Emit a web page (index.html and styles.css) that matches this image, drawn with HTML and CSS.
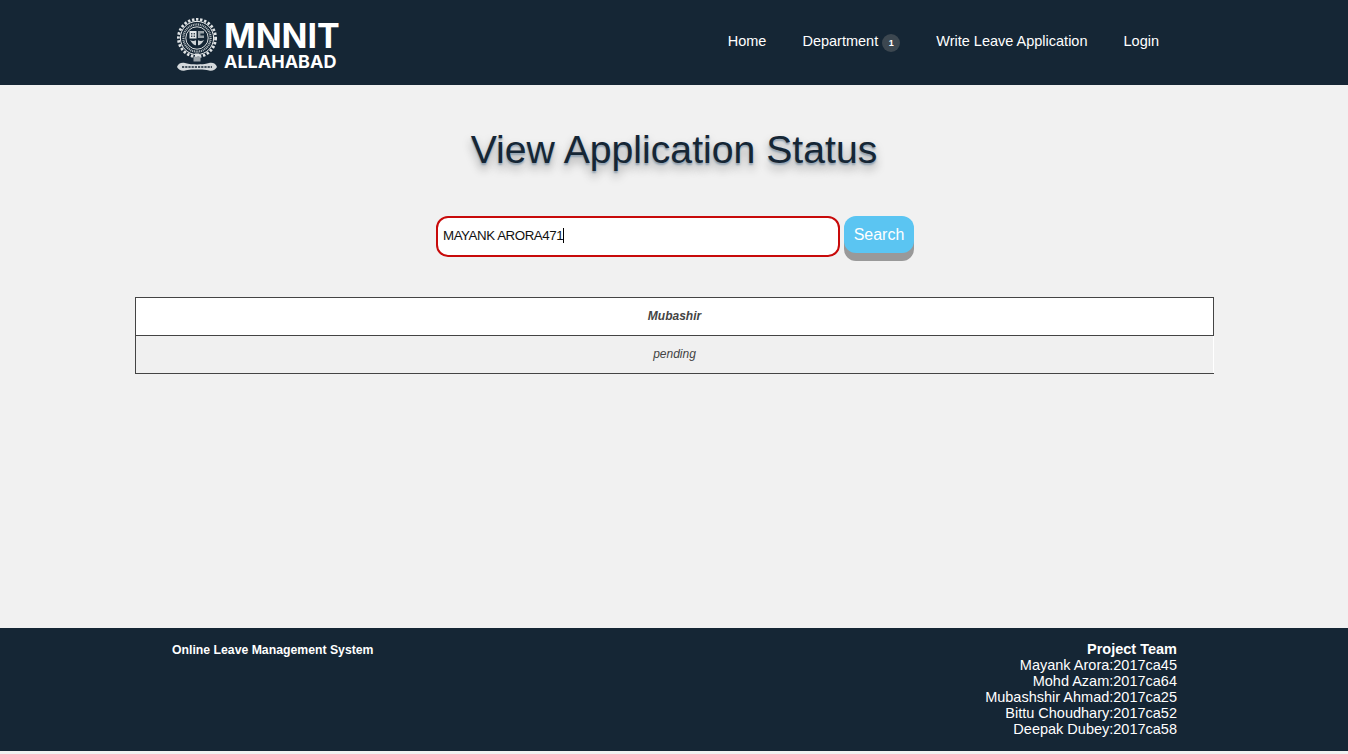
FILE: index.html
```html
<!DOCTYPE html>
<html lang="en">
<head>
    <meta charset="UTF-8">
    <title>View Application Status</title>
    <link rel="stylesheet" href="styles.css">
</head>
<body>

    <header class="topbar">
        <a class="logo" href="#">
            <svg class="emblem" viewBox="0 0 42 56" width="42" height="56">
                <!-- gear teeth -->
                <circle cx="21" cy="21" r="18.6" fill="none" stroke="#dfe3e5" stroke-width="2.8" stroke-dasharray="2.4 1.7"/>
                <circle cx="21" cy="21" r="16.6" fill="none" stroke="#eef0f1" stroke-width="1"/>
                <circle cx="21" cy="21" r="13.6" fill="none" stroke="#b9c0c4" stroke-width="2.2" stroke-dasharray="1 0.8"/>
                <circle cx="21" cy="21" r="11.2" fill="none" stroke="#eef0f1" stroke-width="0.9"/>
                <!-- shield -->
                <rect x="13.5" y="14" width="7" height="7.5" fill="#e4e7e9"/>
                <path d="M15 16h1.4v1.4H15zM17.6 16H19v1.4h-1.4zM15 18.6h1.4V20H15zM17.6 18.6H19V20h-1.4z" fill="#3b4853"/>
                <path d="M22 14h6v2.4h-3.6v2.2H28V21h-6z" fill="#9aa3a9"/>
                <path d="M14 23c2 1.400 4 1.400 6 0.300v5c-2 0-4-1.800-6-5.300zM28 23c-2 1.400-4 1.400-6 0.300v5c2 0 4-1.800 6-5.300z" fill="#cfd4d7"/>
                <!-- stem and scroll -->
                <path d="M17.500 39.500h7v5h-7z" fill="#9aa3a9"/>
                <path d="M19 36.500h4v3h-4z" fill="#dfe3e5"/>
                <path d="M1 50c1-3.500 4.500-5 8-4 4 1.200 8 1.400 12 1.400s8-0.200 12-1.400c3.500-1 7 0.500 8 4-1.500 3-5 4.500-8 3.500-4-1.200-8-1-12-1s-8-0.200-12 1c-3 1-6.500-0.500-8-3.500z" fill="#d4d9dc"/>
                <path d="M6 50h30" stroke="#152635" stroke-width="1.500" stroke-dasharray="2.200 1"/>
            </svg>
            <span class="logo-text">
                <span class="logo-big">MNNIT</span>
                <span class="logo-small">ALLAHABAD</span>
            </span>
        </a>
        <nav class="menu">
            <a href="#">Home</a>
            <a href="#">Department <span class="badge">1</span></a>
            <a href="#">Write Leave Application</a>
            <a href="#">Login</a>
        </nav>
    </header>

    <main class="content">
        <h1 class="title">View Application Status</h1>

        <form class="search">
            <div class="search-input">MAYANK ARORA471<span class="caret"></span></div>
            <button type="button" class="search-btn">Search</button>
        </form>

        <table class="status-table">
            <tr>
                <th>Mubashir</th>
            </tr>
            <tr>
                <td>pending</td>
            </tr>
        </table>
    </main>

    <footer class="footer">
        <div class="footer-left">Online Leave Management System</div>
        <div class="footer-right">
            <strong>Project Team</strong><br>
            Mayank Arora:2017ca45<br>
            Mohd Azam:2017ca64<br>
            Mubashshir Ahmad:2017ca25<br>
            Bittu Choudhary:2017ca52<br>
            Deepak Dubey:2017ca58
        </div>
    </footer>

</body>
</html>
```

FILE: styles.css
```css
html, body {
    margin: 0;
    padding: 0;
}
body {
    font-family: "Liberation Sans", Arial, sans-serif;
    background-color: #f1f1f1;
    height: 754px;
    overflow: hidden;
}
.topbar {
    height: 85px;
    background-color: #152635;
    display: flex;
    justify-content: space-between;
    padding: 0 189px 0 176px;
}
.logo {
    display: flex;
    align-items: flex-start;
    gap: 7px;
    padding-top: 17px;
    text-decoration: none;
    color: #fff;
}
.logo-text {
    display: flex;
    flex-direction: column;
    font-family: Inter, "Liberation Sans", sans-serif;
    font-weight: 700;
    margin-left: -1px;
}
.logo-big {
    font-size: 34px;
    line-height: 33px;
    margin-top: 2px;
}
.logo-small {
    font-size: 18px;
    line-height: 18px;
    margin-top: 1px;
}
.menu {
    display: flex;
    gap: 36px;
    padding-top: 33px;
}
.menu a {
    color: #fff;
    font-size: 14.5px;
    line-height: 16px;
    text-decoration: none;
}
.badge {
    display: inline-block;
    width: 18px;
    height: 18px;
    line-height: 18px;
    border-radius: 50%;
    background-color: #3c4750;
    font-size: 9px;
    font-weight: bold;
    text-align: center;
}
.content {
    height: 543px;
    padding-top: 42px;
    box-sizing: border-box;
}
.title {
    margin: 0;
    font-size: 39.2px;
    line-height: 46px;
    font-weight: normal;
    text-align: center;
    color: #152635;
    text-shadow: 0 2px 2px #8fa0b0, 0 6px 10px #9a9a9a;
}
.search {
    display: flex;
    justify-content: center;
    align-items: flex-start;
    gap: 4px;
    margin-top: 43px;
    padding-left: 2px;
}
.search-input {
    width: 404px;
    height: 41px;
    box-sizing: border-box;
    padding-left: 5px;
    line-height: 35px;
    font-size: 13.33px;
    letter-spacing: -0.45px;
    color: #111;
    background-color: #fff;
    border: 2px solid #c80a0a;
    border-radius: 12px;
}
.caret {
    display: inline-block;
    width: 1px;
    height: 15px;
    background-color: #000;
    vertical-align: -3px;
}
.search-btn {
    width: 70px;
    height: 37px;
    margin-bottom: 8px;
    padding: 0;
    border: none;
    border-radius: 12px;
    font-family: inherit;
    font-size: 16px;
    color: #fff;
    background-color: #5bc5f2;
    box-shadow: 0 8px 0 #999;
}
.status-table {
    width: 1079px;
    margin: 36px 0 0 135px;
    border-collapse: collapse;
    font-size: 12px;
    font-style: italic;
    color: #444;
}
.status-table th, .status-table td {
    height: 38px;
    padding: 0 0 2px;
    box-sizing: border-box;
    text-align: center;
    border: 1px solid #444;
}
.status-table th {
    background-color: #fff;
}
.status-table td {
    background-color: #f0f0f0;
    border-right-color: #fff;
}
.footer {
    height: 123px;
    background-color: #152635;
    color: #fff;
    display: flex;
    justify-content: space-between;
    padding: 13px 171px 0 172px;
    box-sizing: border-box;
}
.footer-left {
    font-size: 12.25px;
    font-weight: bold;
    line-height: 18px;
}
.footer-right {
    font-size: 14.5px;
    line-height: 16px;
    text-align: right;
}
```
